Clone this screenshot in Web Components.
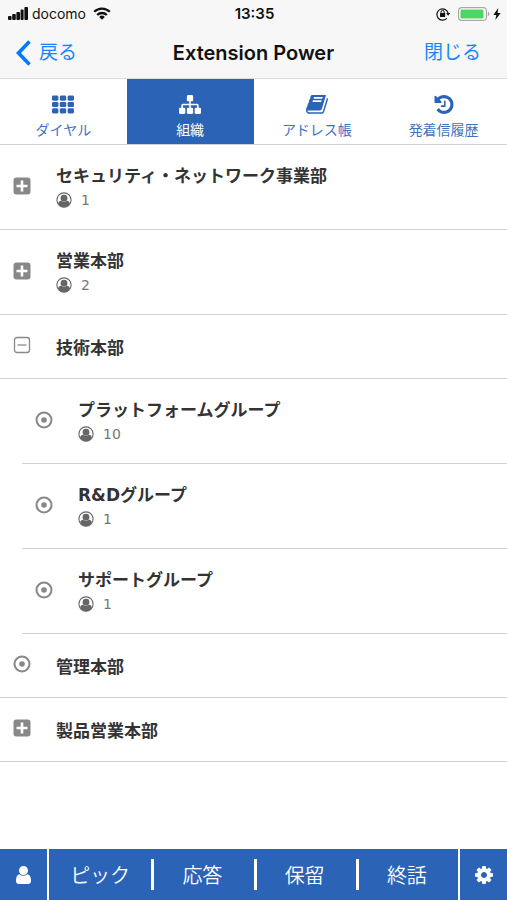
<!DOCTYPE html>
<html lang="ja">
<head>
<meta charset="utf-8">
<meta name="viewport" content="width=device-width, initial-scale=1">
<title>Extension Power</title>
<style>
  body {
    margin: 0;
    background: #fff;
    color: #333;
    font-family: "DejaVu Sans", "Noto Sans CJK JP", sans-serif;
    --blue: #2b64b7;
    --label: #3f73c0;
    --link: #1a84ff;
    --line: #d2d2d2;
    --bar: #f7f7f7;
  }
</style>
</head>
<body>
<ep-app>
  <ep-status slot="top" carrier="docomo" time="13:35"></ep-status>
  <ep-navbar slot="top">
    <span slot="back">戻る</span>
    Extension Power
    <span slot="close">閉じる</span>
  </ep-navbar>
  <ep-tabs slot="top">
    <ep-tab icon="th">ダイヤル</ep-tab>
    <ep-tab icon="sitemap" active>組織</ep-tab>
    <ep-tab icon="book">アドレス帳</ep-tab>
    <ep-tab icon="history">発着信履歴</ep-tab>
  </ep-tabs>

  <ep-node icon="plus" count="1">セキュリティ・ネットワーク事業部</ep-node>
  <ep-node icon="plus" count="2">営業本部</ep-node>
  <ep-node icon="minus">技術本部
    <ep-node slot="children" icon="dot" count="10">プラットフォームグループ</ep-node>
    <ep-node slot="children" icon="dot" count="1">R&amp;Dグループ</ep-node>
    <ep-node slot="children" icon="dot" count="1">サポートグループ</ep-node>
  </ep-node>
  <ep-node icon="dot">管理本部</ep-node>
  <ep-node icon="plus">製品営業本部</ep-node>

  <ep-callbar slot="bottom">
    <ep-call>ピック</ep-call>
    <ep-call>応答</ep-call>
    <ep-call>保留</ep-call>
    <ep-call>終話</ep-call>
  </ep-callbar>
</ep-app>

<script>
const ICONS = {
  th: ['0 0 22 18', '<g fill="currentColor"><rect width="6.400" height="5.200" rx="1.4"/><rect x="7.800" width="6.400" height="5.200" rx="1.4"/><rect x="15.600" width="6.400" height="5.200" rx="1.4"/><rect y="6.400" width="6.400" height="5.200" rx="1.4"/><rect x="7.800" y="6.400" width="6.400" height="5.200" rx="1.4"/><rect x="15.600" y="6.400" width="6.400" height="5.200" rx="1.4"/><rect y="12.800" width="6.400" height="5.200" rx="1.4"/><rect x="7.800" y="12.800" width="6.400" height="5.200" rx="1.4"/><rect x="15.600" y="12.800" width="6.400" height="5.200" rx="1.4"/></g>'],
  sitemap: ['0 128 1792 1536', '<path fill="currentColor" d="M1792 1248v320q0 40-28 68t-68 28h-320q-40 0-68-28t-28-68v-320q0-40 28-68t68-28h96v-192h-512v192h96q40 0 68 28t28 68v320q0 40-28 68t-68 28h-320q-40 0-68-28t-28-68v-320q0-40 28-68t68-28h96v-192h-512v192h96q40 0 68 28t28 68v320q0 40-28 68t-68 28h-320q-40 0-68-28t-28-68v-320q0-40 28-68t68-28h96v-192q0-52 38-90t90-38h512v-192h-96q-40 0-68-28t-28-68v-320q0-40 28-68t68-28h320q40 0 68 28t28 68v320q0 40-28 68t-68 28h-96v192h512q52 0 90 38t38 90v192h96q40 0 68 28t28 68z"/>'],
  book: ['64 240 1670 1430', '<path fill="currentColor" d="M1703 478q40 57 18 129l-275 906q-19 64-76.5 107.5t-122.5 43.5h-923q-77 0-148.5-53.5t-99.5-131.5q-24-67-2-127 0-4 3-27t4-37q1-8-3-21.5t-3-19.5q2-11 8-21t16.5-23.5 16.5-23.5q23-38 45-91.5t30-91.5q3-10 .5-30t-.5-28q3-11 17-28t17-23q21-36 42-92t25-90q1-9-2.5-32t.5-28q4-13 22-30.5t22-22.5q19-26 42.5-84.5t27.5-96.5q1-8-3-25.5t-2-26.5q2-8 9-18t18-23 17-21q8-12 16.5-30.5t15-35 16-36 19.5-32 26.5-23.5 36-11.5 47.5 5.5l-1 3q38-9 51-9h761q74 0 114 56t18 130l-274 906q-36 119-71.5 153.5t-128.5 34.5h-869q-27 0-38 15-11 16-1 43 24 70 144 70h923q29 0 56-15.5t35-41.5l300-987q7-22 5-57 38 15 59 43zm-1064 2q-4 13 2 22.5t20 9.5h608q13 0 25.5-9.5t16.5-22.5l21-64q4-13-2-22.5t-20-9.5h-608q-13 0-25.5 9.5t-16.5 22.5zm-83 256q-4 13 2 22.5t20 9.5h608q13 0 25.5-9.5t16.5-22.5l21-64q4-13-2-22.5t-20-9.5h-608q-13 0-25.5 9.5t-16.5 22.5z"/>'],
  history: ['128 128 1536 1536', '<path fill="currentColor" d="M1664 896q0 156-61 298t-164 245-245 164-298 61q-172 0-327-72.5t-264-204.5q-7-10-6.5-22.5t8.5-20.5l137-138q10-9 25-9 16 2 23 12 73 95 179 147t225 52q104 0 198.5-40.5t163.5-109.5 109.5-163.5 40.5-198.5-40.5-198.5-109.5-163.5-163.5-109.5-198.5-40.5q-98 0-188 35.5t-160 101.5l137 138q31 30 14 69-17 40-59 40h-448q-26 0-45-19t-19-45v-448q0-42 40-59 39-17 69 14l130 129q107-101 244.5-156.5t284.5-55.5q156 0 298 61t245 164 164 245 61 298zm-640-288v448q0 14-9 23t-23 9h-320q-14 0-23-9t-9-23v-64q0-14 9-23t23-9h224v-352q0-14 9-23t23-9h64q14 0 23 9t9 23z"/>'],
  user: ['256 128 1280 1536', '<path fill="currentColor" d="M1536 1399q0 109-62.5 187t-150.5 78h-854q-88 0-150.5-78t-62.5-187q0-85 8.5-160.5t31.5-152 58.5-131 94-89 134.5-34.5q131 128 313 128t313-128q76 0 134.5 34.5t94 89 58.5 131 31.5 152 8.5 160.5zm-256-887q0 159-112.5 271.5t-271.5 112.5-271.5-112.5-112.5-271.5 112.5-271.5 271.5-112.5 271.5 112.5 112.5 271.5z"/>'],
  cog: ['128 128 1536 1536', '<path fill="currentColor" d="M1152 896q0-106-75-181t-181-75-181 75-75 181 75 181 181 75 181-75 75-181zm512-109v222q0 12-8 23t-20 13l-185 28q-19 54-39 91 35 50 107 138 10 12 10 25t-9 23q-27 37-99 108t-94 71q-12 0-26-9l-138-108q-44 23-91 38-16 136-29 186-7 28-36 28h-222q-14 0-24.5-8.5t-11.5-21.5l-28-184q-49-16-90-37l-141 107q-10 9-25 9-14 0-25-11-126-114-165-168-7-10-7-23 0-12 8-23 15-21 51-66.5t54-70.5q-27-50-41-99l-183-27q-13-2-21-12.5t-8-23.5v-222q0-12 8-23t19-13l186-28q14-46 39-92-40-57-107-138-10-12-10-24 0-10 9-23 26-36 98.5-107.5t94.5-71.5q13 0 26 10l138 107q44-23 91-38 16-136 29-186 7-28 36-28h222q14 0 24.5 8.5t11.5 21.5l28 184q49 16 90 37l142-107q9-9 24-9 13 0 25 10 129 119 165 170 7 8 7 22 0 12-8 23-15 21-51 66.5t-54 70.5q26 50 41 98l183 28q13 2 21 12.5t8 23.5z"/>'],
  plus: ['0 0 18 18', '<rect x=".5" y=".5" width="17" height="17" rx="3" fill="currentColor"/><path d="M9 3.5v11M3.5 9h11" stroke="#fff" stroke-width="2.6"/>'],
  minus: ['0 0 18 18', '<rect x="1.5" y="1.5" width="15" height="15" rx="2.6" fill="none" stroke="currentColor" stroke-width="1.3"/><path d="M4.500 9h9" stroke="currentColor" stroke-width="1.3"/>'],
  dot: ['0 0 18 18', '<circle cx="9" cy="9" r="7.500" fill="none" stroke="currentColor" stroke-width="2"/><circle cx="9" cy="9" r="2.800" fill="currentColor"/>'],
  member: ['0 0 16 16', '<circle cx="8" cy="8" r="7.100" fill="none" stroke="currentColor" stroke-width="1.100"/><circle cx="8" cy="6.200" r="3.400" fill="currentColor"/><path d="M2 11.400c.4-1.500 1.500-2.500 3-2.700 1.700 1.500 4.300 1.500 6 0 1.500.2 2.600 1.200 3 2.700A7.200 7.200 0 0 1 8 15.200a7.200 7.200 0 0 1-6-3.800z" fill="currentColor"/>'],
  back: ['0 0 15 26', '<path d="M13.500 1.500 2.500 13l11 11.500" fill="none" stroke="currentColor" stroke-width="3.6"/>'],
  signal: ['0 0 20 13', '<g fill="currentColor"><rect y="9" width="3.600" height="4" rx="1"/><rect x="4.200" y="7" width="3.600" height="6" rx="1"/><rect x="8.400" y="5" width="3.600" height="8" rx="1"/><rect x="12.600" y="2.500" width="3" height="10.500" rx="1"/><rect x="16.400" width="3.600" height="13" rx="1"/></g>'],
  wifi: ['0 0 18 13', '<g fill="none" stroke="currentColor" stroke-width="2.300"><path d="M1.200 4.800a11 11 0 0 1 15.600 0"/><path d="M4.200 8a6.800 6.800 0 0 1 9.600 0"/></g><path d="M9 12.700 6.200 9.900a4 4 0 0 1 5.600 0z" fill="currentColor"/>'],
  lock: ['0 0 14 14', '<path d="M10.800 11.400A5.700 5.700 0 1 1 12.200 6.300" fill="none" stroke="currentColor" stroke-width="1.200"/><path d="M10.100 6h4l-2 2.800z" fill="currentColor"/><rect x="4" y="6" width="5.200" height="4" rx=".6" fill="currentColor"/><path d="M5 6.300V5a1.600 1.600 0 0 1 3.200 0v1.300" fill="none" stroke="currentColor" stroke-width="1"/>'],
  battery: ['0 0 32 14', '<rect x=".6" y=".6" width="27.800" height="12.800" rx="3.200" fill="#fff" stroke="#a8a8a8" stroke-width="1.200"/><rect x="2.500" y="2.500" width="23" height="9" rx="1.200" fill="#4cd663"/><path d="M29.800 4.600c2 .7 2 4.100 0 4.800z" fill="#a8a8a8"/>'],
  bolt: ['0 0 8 12', '<path d="M5.300 0 .3 6.900h3L2.300 12l5.400-7H4.600z" fill="currentColor"/>']
};

customElements.define('ep-icon', class extends HTMLElement {
  static observedAttributes = ['name'];
  constructor() {
    super();
    this.attachShadow({ mode: 'open' }).innerHTML =
      '<style>:host{display:inline-flex;flex:none}svg{display:block;width:100%;height:100%}</style><svg aria-hidden="true"></svg>';
  }
  attributeChangedCallback(attribute, before, name) {
    const [box, shape] = ICONS[name];
    const svg = this.shadowRoot.querySelector('svg');
    svg.setAttribute('viewBox', box);
    svg.innerHTML = shape;
  }
});

function define(name, css, html, setup) {
  const template = document.createElement('template');
  template.innerHTML = `<style>*{box-sizing:border-box}button{font:inherit;color:inherit;background:none;border:0;padding:0;margin:0;cursor:pointer}${css}</style>${html}`;
  customElements.define(name, class extends HTMLElement {
    constructor() {
      super();
      this.attachShadow({ mode: 'open' }).append(template.content.cloneNode(true));
    }
    connectedCallback() {
      if (setup) setup(this, this.shadowRoot);
    }
  });
}

define('ep-app', `
  :host{display:flex;flex-direction:column;min-height:100vh}
  header{position:sticky;top:0;z-index:1;background:#fff}
  main{flex:1}
  footer{position:sticky;bottom:0}
`, '<header><slot name="top"></slot></header><main><slot></slot></main><footer><slot name="bottom"></slot></footer>');

define('ep-status', `
  :host{display:grid;grid-template-columns:1fr auto 1fr;align-items:center;padding:0 6px 0 8px;background:var(--bar);color:#111;font:15px/27px Inter,sans-serif}
  div{display:flex;align-items:center}
  .left{gap:4px}
  .left span{font-size:14px}
  .right{justify-content:flex-end;gap:3px}
  time{font-weight:600}
  .signal{width:20px;height:13px}.wifi{width:18px;height:13px;margin-left:3px}
  .lock{width:14px;height:14px;margin-right:5px}.battery{width:32px;height:14px}.bolt{width:8px;height:12px}
`, `
  <div class="left"><ep-icon class="signal" name="signal"></ep-icon><span></span><ep-icon class="wifi" name="wifi"></ep-icon></div>
  <time></time>
  <div class="right"><ep-icon class="lock" name="lock"></ep-icon><ep-icon class="battery" name="battery"></ep-icon><ep-icon class="bolt" name="bolt"></ep-icon></div>
`, (el, root) => {
  root.querySelector('span').textContent = el.getAttribute('carrier');
  root.querySelector('time').textContent = el.getAttribute('time');
});

define('ep-navbar', `
  :host{display:grid;grid-template-columns:1fr auto 1fr;align-items:center;padding:12px 16px 11px;background:var(--bar);border-bottom:1px solid #dcdcdc;font-family:Inter,"Noto Sans CJK JP",sans-serif}
  button{display:flex;align-items:center;gap:8px;color:var(--link);font-size:19px;line-height:28px}
  button:last-child{justify-self:end;padding-right:10px}
  h1{margin:0;color:#111;font-size:20px;line-height:28px;font-weight:600}
  ep-icon{width:15px;height:26px;color:#007aff}
`, `
  <button type="button"><ep-icon name="back"></ep-icon><slot name="back"></slot></button>
  <h1><slot></slot></h1>
  <button type="button"><slot name="close"></slot></button>
`);

define('ep-tabs', `
  nav{display:grid;grid-template-columns:repeat(4,1fr);border-bottom:1px solid var(--line)}
`, '<nav><slot></slot></nav>');

define('ep-tab', `
  :host{display:block;color:var(--label)}
  :host([active]){background:var(--blue);color:#fff}
  button{display:flex;flex-direction:column;align-items:center;gap:5px;width:100%;padding:16px 0 5px;font:14px/20px "Noto Sans CJK JP",sans-serif}
  ep-icon{width:22px;height:19px;color:var(--blue)}
  :host([active]) ep-icon{color:#fff}
`, '<button type="button"><ep-icon></ep-icon><slot></slot></button>', (el, root) => {
  root.querySelector('ep-icon').setAttribute('name', el.getAttribute('icon'));
  if (el.hasAttribute('active')) root.querySelector('button').setAttribute('aria-current', 'page');
});

define('ep-node', `
  :host{display:block}
  .row{display:flex;align-items:center;gap:25px;min-height:64px;padding:0 13px;border-bottom:1px solid var(--line)}
  .toggle{display:flex;padding-bottom:3px;color:#888}
  .toggle ep-icon{width:18px;height:18px}
  .body{display:block;flex:1;padding:19px 0 17px;text-align:left;line-height:24px}
  .title{display:block;font-size:17px;font-weight:700;color:#333}
  .count{display:flex;align-items:center;gap:9px;font-size:14px;color:#777}
  .count ep-icon{width:16px;height:16px;color:#666}
  .children{margin-left:22px}
`, `
  <div class="row">
    <button class="toggle" type="button"><ep-icon></ep-icon></button>
    <button class="body" type="button"><span class="title"><slot></slot></span></button>
  </div>
  <div class="children"><slot name="children"></slot></div>
`, (el, root) => {
  const kind = el.getAttribute('icon');
  const toggle = root.querySelector('.toggle');
  toggle.firstElementChild.setAttribute('name', kind);
  toggle.setAttribute('aria-label', { plus: '開く', minus: '閉じる', dot: '選択' }[kind]);
  if (el.hasAttribute('count') && !root.querySelector('.count')) {
    const count = document.createElement('span');
    count.className = 'count';
    count.innerHTML = '<ep-icon name="member"></ep-icon><span></span>';
    count.lastChild.textContent = el.getAttribute('count');
    root.querySelector('.body').append(count);
  }
});

define('ep-callbar', `
  :host{display:grid;grid-template-columns:47px 1fr 47px;gap:2px;background:#fff;color:#fff}
  button,.calls{background:var(--blue)}
  button{display:flex;align-items:center;justify-content:center}
  .calls{display:grid;grid-template-columns:repeat(4,1fr);padding:10px 0}
  .user{width:15px;height:18px}.cog{width:18px;height:18px}
`, `
  <button type="button" aria-label="ユーザー"><ep-icon class="user" name="user"></ep-icon></button>
  <div class="calls"><slot></slot></div>
  <button type="button" aria-label="設定"><ep-icon class="cog" name="cog"></ep-icon></button>
`);

define('ep-call', `
  :host{display:block;border-left:3px solid #fff}
  :host(:first-child){border-left-color:transparent}
  button{width:100%;padding-right:3px;font:350 20px/31px "Noto Sans CJK JP",sans-serif}
`, '<button type="button"><slot></slot></button>');
</script>
</body>
</html>
